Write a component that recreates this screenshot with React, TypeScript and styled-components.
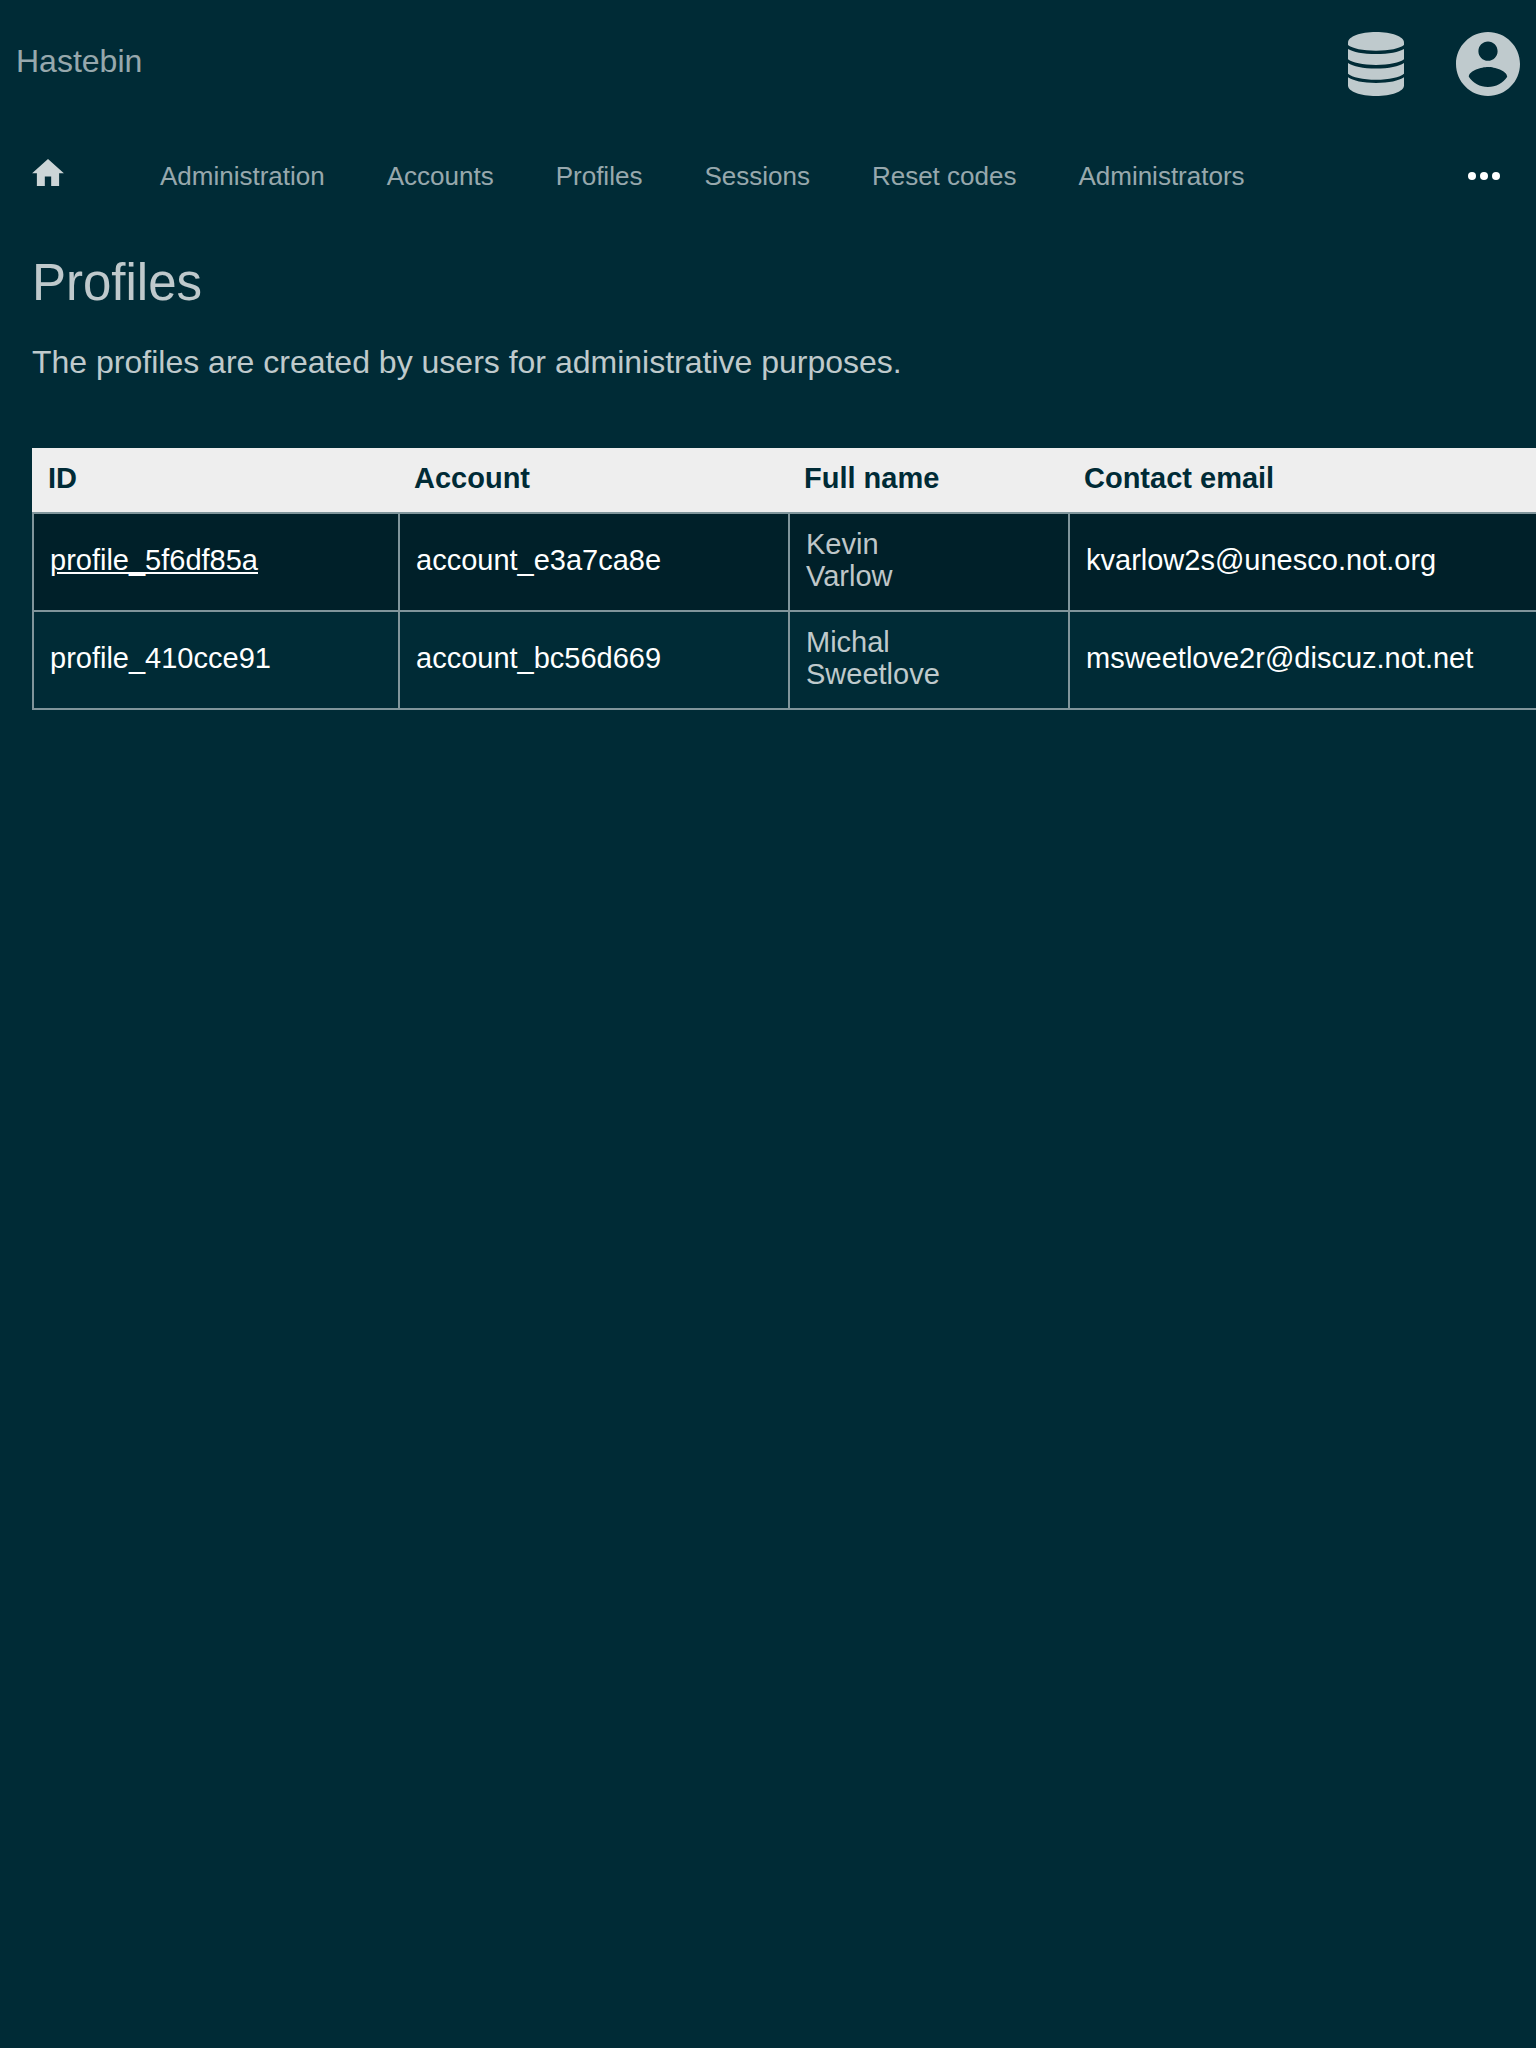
import React from "react";
import styled, { createGlobalStyle } from "styled-components";

const GlobalStyle = createGlobalStyle`
  *, *::before, *::after {
    box-sizing: border-box;
  }
  body {
    margin: 0;
    min-height: 100vh;
    background: #002b36;
    color: rgba(255, 255, 255, 0.75);
    font-family: "Liberation Sans", Arial, Helvetica, sans-serif;
    font-size: 32px;
  }
`;

const Header = styled.header`
  display: flex;
  justify-content: space-between;
  align-items: flex-start;
  height: 128px;
  padding: 32px 16px;
`;

const Brand = styled.a`
  color: rgba(255, 255, 255, 0.6);
  font-size: 32px;
  line-height: 58px;
  text-decoration: none;
`;

const Actions = styled.div`
  display: flex;
  gap: 48px;
`;

const IconButton = styled.button<{ $tone?: string }>`
  display: flex;
  align-items: center;
  justify-content: center;
  min-width: 64px;
  height: 64px;
  padding: 0;
  border: 0;
  background: none;
  color: ${(p) => p.$tone ?? "#bfcacd"};
  cursor: pointer;

  svg {
    display: block;
    fill: currentColor;
  }
`;

const Nav = styled.nav`
  display: flex;
  align-items: center;
  height: 96px;
  padding: 0 20px 0 32px;
`;

const HomeLink = styled.a`
  display: flex;
  align-items: center;
  width: 128px;
  padding-bottom: 8px;
  color: #ccd5d7;

  svg {
    display: block;
    fill: currentColor;
  }
`;

const NavList = styled.ul`
  display: flex;
  flex: 1;
  gap: 62px;
  margin: 0;
  padding: 0;
  list-style: none;
`;

const NavLink = styled.a`
  display: block;
  color: rgba(255, 255, 255, 0.6);
  font-size: 26px;
  line-height: 32px;
  white-space: nowrap;
  text-decoration: none;
`;

const Main = styled.main`
  padding: 24px 0 64px 32px;
`;

const Title = styled.h1`
  margin: 0;
  font-size: 51px;
  font-weight: 400;
  line-height: 70px;
`;

const Lead = styled.p`
  margin: 24px 32px 66px 0;
  font-size: 32px;
  line-height: 40px;
`;

const TableScroll = styled.div`
  overflow-x: auto;
  scrollbar-width: none;
`;

const Table = styled.table`
  width: 100%;
  min-width: 1568px;
  table-layout: fixed;
  border-collapse: separate;
  border-spacing: 0;
  font-size: 29px;
  line-height: 32px;
`;

const Column = styled.col<{ $width?: number }>`
  width: ${(p) => (p.$width ? `${p.$width}px` : "auto")};
`;

const HeadCell = styled.th`
  padding: 14px 16px 18px;
  background: #eee;
  color: #002b36;
  font-weight: 700;
  text-align: left;
`;

const Cell = styled.td`
  padding: 14px 16px 18px;
  border: 0 solid rgba(255, 255, 255, 0.5);
  border-width: 0 0 2px 2px;
  background-clip: padding-box;

  tr:first-child > & {
    border-top-width: 2px;
  }

  tr:nth-child(odd) > & {
    background-color: #002029;
  }
`;

const CellLink = styled.a<{ $underlined?: boolean }>`
  color: #fff;
  text-decoration: ${(p) => (p.$underlined ? "underline" : "none")};
`;

const sections = [
  "Administration",
  "Accounts",
  "Profiles",
  "Sessions",
  "Reset codes",
  "Administrators",
];

const profiles = [
  {
    id: "profile_5f6df85a",
    account: "account_e3a7ca8e",
    first: "Kevin",
    last: "Varlow",
    email: "kvarlow2s@unesco.not.org",
    active: true,
  },
  {
    id: "profile_410cce91",
    account: "account_bc56d669",
    first: "Michal",
    last: "Sweetlove",
    email: "msweetlove2r@discuz.not.net",
    active: false,
  },
];

const DatabaseIcon = () => (
  <svg width="56" height="64" viewBox="0 0 56 64" aria-hidden="true">
    <path d="M0 10.5C0 4.500 12.500 0 28 0s28 4.500 28 10.500V13c-4 3.500-15 5.700-28 5.700S4 16.500 0 13z" />
    <path d="M0 17c5 3 15 5 28 5s23-2 28-5v10.300c-4 3.200-15 5.700-28 5.700S4 30.500 0 27.300z" />
    <path d="M0 31c5 3.500 15 5.600 28 5.600s23-2.100 28-5.600v10.700c-4 3.500-15 6-28 6s-24-2.500-28-6z" />
    <path d="M0 45.300c5 3.500 15 5.700 28 5.700s23-2.200 28-5.700V53.500C56 59.500 43.500 64 28 64S0 59.500 0 53.500z" />
  </svg>
);

const AccountIcon = () => (
  <svg width="64" height="64" viewBox="2 2 20 20" aria-hidden="true">
    <path d="M12 2C6.480 2 2 6.480 2 12s4.480 10 10 10 10-4.480 10-10S17.520 2 12 2zm0 3c1.660 0 3 1.340 3 3s-1.340 3-3 3-3-1.340-3-3 1.340-3 3-3zm0 14.200c-2.500 0-4.710-1.280-6-3.220.030-1.990 4-3.080 6-3.080 1.990 0 5.970 1.090 6 3.080-1.290 1.940-3.500 3.220-6 3.220z" />
  </svg>
);

const HomeIcon = () => (
  <svg width="32" height="27" viewBox="2 3 20 17" aria-hidden="true">
    <path d="M10 20v-6h4v6h5v-8h3L12 3 2 12h3v8z" />
  </svg>
);

const MoreIcon = () => (
  <svg width="32" height="8" viewBox="0 0 32 8" aria-hidden="true">
    <circle cx="4" cy="4" r="4" />
    <circle cx="16" cy="4" r="4" />
    <circle cx="28" cy="4" r="4" />
  </svg>
);

export default function App() {
  return (
    <>
      <GlobalStyle />
      <Header>
        <Brand href="#">Hastebin</Brand>
        <Actions>
          <IconButton type="button" aria-label="Database">
            <DatabaseIcon />
          </IconButton>
          <IconButton type="button" aria-label="Account">
            <AccountIcon />
          </IconButton>
        </Actions>
      </Header>
      <Nav aria-label="Sections">
        <HomeLink href="#" aria-label="Home">
          <HomeIcon />
        </HomeLink>
        <NavList>
          {sections.map((name) => (
            <li key={name}>
              <NavLink href="#">{name}</NavLink>
            </li>
          ))}
        </NavList>
        <IconButton type="button" aria-label="More" $tone="#fff">
          <MoreIcon />
        </IconButton>
      </Nav>
      <Main>
        <Title>Profiles</Title>
        <Lead>The profiles are created by users for administrative purposes.</Lead>
        <TableScroll>
          <Table>
            <colgroup>
              <Column $width={366} />
              <Column $width={390} />
              <Column $width={280} />
              <Column />
            </colgroup>
            <thead>
              <tr>
                <HeadCell scope="col">ID</HeadCell>
                <HeadCell scope="col">Account</HeadCell>
                <HeadCell scope="col">Full name</HeadCell>
                <HeadCell scope="col">Contact email</HeadCell>
              </tr>
            </thead>
            <tbody>
              {profiles.map((p) => (
                <tr key={p.id}>
                  <Cell>
                    <CellLink href="#" $underlined={p.active}>
                      {p.id}
                    </CellLink>
                  </Cell>
                  <Cell>
                    <CellLink href="#">{p.account}</CellLink>
                  </Cell>
                  <Cell>
                    {p.first}
                    <br />
                    {p.last}
                  </Cell>
                  <Cell>
                    <CellLink href={`mailto:${p.email}`}>{p.email}</CellLink>
                  </Cell>
                </tr>
              ))}
            </tbody>
          </Table>
        </TableScroll>
      </Main>
    </>
  );
}
